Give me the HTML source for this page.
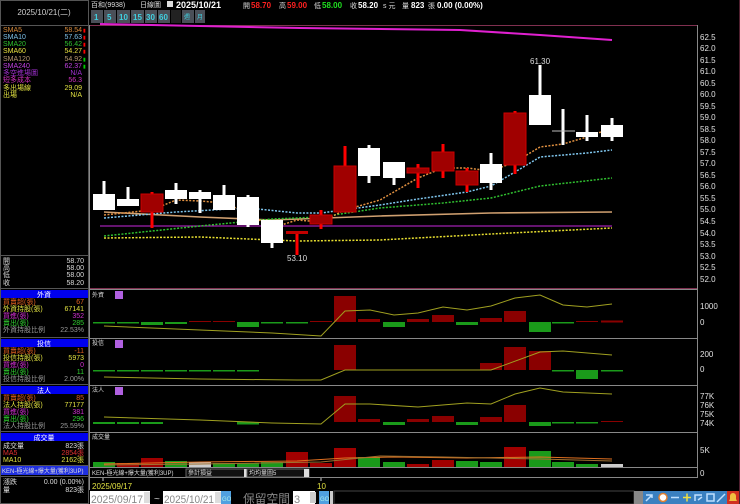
<!DOCTYPE html>
<html><head><meta charset="utf-8"><style>
html,body{margin:0;padding:0;background:#000;width:740px;height:504px;overflow:hidden}
svg{display:block}
text{font-family:"Liberation Sans","Noto Sans CJK TC",sans-serif}
.s{font-size:7px}
.r{text-anchor:end}
.ax{font-size:8px;fill:#e0e0e0;font-family:"DejaVu Sans",sans-serif}
</style></head><body>
<svg width="740" height="504" viewBox="0 0 740 504" xmlns="http://www.w3.org/2000/svg">
<rect width="740" height="504" fill="#000"/>
<rect x="0.5" y="0.5" width="88" height="503" fill="none" stroke="#555"/>
<line x1="0" y1="25.5" x2="89" y2="25.5" stroke="#555"/>
<text x="44" y="15" fill="#ccc" font-size="8" text-anchor="middle">2025/10/21(二)</text>
<g class="s">
<text x="3" y="32" fill="#d88a3a">SMA5</text><text x="82" y="32" fill="#d88a3a" class="r">58.54</text>
<text x="3" y="39" fill="#7ec0e8">SMA10</text><text x="82" y="39" fill="#7ec0e8" class="r">57.63</text>
<text x="3" y="46" fill="#2ec02e">SMA20</text><text x="82" y="46" fill="#2ec02e" class="r">56.42</text>
<text x="3" y="53" fill="#e8e040">SMA60</text><text x="82" y="53" fill="#e8e040" class="r">54.27</text>
<text x="3" y="61" fill="#b89870">SMA120</text><text x="82" y="61" fill="#b89870" class="r">54.92</text>
<text x="3" y="68" fill="#c040e0">SMA240</text><text x="82" y="68" fill="#c040e0" class="r">62.37</text>
<text x="3" y="75" fill="#a030d0">多空進場圖</text><text x="82" y="75" fill="#a030d0" class="r">N/A</text>
<text x="3" y="82" fill="#d030c0">短多成本</text><text x="82" y="82" fill="#d030c0" class="r">56.3</text>
<text x="3" y="90" fill="#e0e040">多出場線</text><text x="82" y="90" fill="#e0e040" class="r">29.09</text>
<text x="3" y="97" fill="#e0e040">出場</text><text x="82" y="97" fill="#e0e040" class="r">N/A</text>
</g>
<g fill="#f00" font-size="5"><text x="83" y="32">▮</text><text x="83" y="39">▮</text><text x="83" y="46">▮</text><text x="83" y="53">▮</text></g>
<g fill="#0c0" font-size="5"><text x="83" y="61">▮</text><text x="83" y="68">▮</text></g>
<line x1="0" y1="255.5" x2="89" y2="255.5" stroke="#555"/>
<g class="s" fill="#ddd">
<text x="3" y="263">開</text><text x="84" y="263" class="r">58.70</text>
<text x="3" y="270">高</text><text x="84" y="270" class="r">58.00</text>
<text x="3" y="277">低</text><text x="84" y="277" class="r">58.00</text>
<text x="3" y="285">收</text><text x="84" y="285" class="r">58.20</text>
</g>
<line x1="0" y1="288.5" x2="89" y2="288.5" stroke="#555"/>
<g class="s">
<rect x="1" y="290" width="87" height="8" fill="#0000ee"/><text x="44" y="297" fill="#fff" text-anchor="middle">外資</text>
<text x="3" y="304" fill="#e06020">買賣超(張)</text><text x="84" y="304" class="r" fill="#e06020">67</text>
<text x="3" y="311" fill="#e0e040">外資持股(張)</text><text x="84" y="311" class="r" fill="#e0e040">67141</text>
<text x="3" y="318" fill="#d030d0">買進(張)</text><text x="84" y="318" class="r" fill="#d030d0">352</text>
<text x="3" y="325" fill="#30d030">賣出(張)</text><text x="84" y="325" class="r" fill="#30d030">285</text>
<text x="3" y="332" fill="#999">外資持股比例</text><text x="84" y="332" class="r" fill="#999">22.53%</text>
<line x1="0" y1="337.5" x2="89" y2="337.5" stroke="#555"/>
<rect x="1" y="339" width="87" height="8" fill="#0000ee"/><text x="44" y="346" fill="#fff" text-anchor="middle">投信</text>
<text x="3" y="353" fill="#e06020">買賣超(張)</text><text x="84" y="353" class="r" fill="#e06020">-11</text>
<text x="3" y="360" fill="#e0e040">投信持股(張)</text><text x="84" y="360" class="r" fill="#e0e040">5973</text>
<text x="3" y="367" fill="#d030d0">買進(張)</text><text x="84" y="367" class="r" fill="#d030d0">0</text>
<text x="3" y="374" fill="#30d030">賣出(張)</text><text x="84" y="374" class="r" fill="#30d030">11</text>
<text x="3" y="381" fill="#999">投信持股比例</text><text x="84" y="381" class="r" fill="#999">2.00%</text>
<line x1="0" y1="384.5" x2="89" y2="384.5" stroke="#555"/>
<rect x="1" y="386" width="87" height="8" fill="#0000ee"/><text x="44" y="393" fill="#fff" text-anchor="middle">法人</text>
<text x="3" y="400" fill="#e06020">買賣超(張)</text><text x="84" y="400" class="r" fill="#e06020">85</text>
<text x="3" y="407" fill="#e0e040">法人持股(張)</text><text x="84" y="407" class="r" fill="#e0e040">77177</text>
<text x="3" y="414" fill="#d030d0">買進(張)</text><text x="84" y="414" class="r" fill="#d030d0">381</text>
<text x="3" y="421" fill="#30d030">賣出(張)</text><text x="84" y="421" class="r" fill="#30d030">296</text>
<text x="3" y="428" fill="#999">法人持股比例</text><text x="84" y="428" class="r" fill="#999">25.59%</text>
<line x1="0" y1="431.5" x2="89" y2="431.5" stroke="#555"/>
<rect x="1" y="433" width="87" height="8" fill="#0000ee"/><text x="44" y="440" fill="#fff" text-anchor="middle">成交量</text>
<text x="3" y="448" fill="#ddd">成交量</text><text x="84" y="448" class="r" fill="#ddd">823張</text>
<text x="3" y="455" fill="#e03030">MA5</text><text x="84" y="455" class="r" fill="#e03030">2854張</text>
<text x="3" y="462" fill="#e0e040">MA10</text><text x="84" y="462" class="r" fill="#e0e040">2162張</text>
<line x1="0" y1="465.5" x2="89" y2="465.5" stroke="#555"/>
<rect x="1" y="466" width="87" height="9" fill="#2030e0"/><text x="2" y="473" fill="#ddd" font-size="6">KEN-極光線+爆大量(獲利3UP)</text>
<line x1="0" y1="476.5" x2="89" y2="476.5" stroke="#555"/>
<text x="3" y="484" fill="#ddd">漲跌</text><text x="84" y="484" class="r" fill="#ddd">0.00 (0.00%)</text>
<text x="3" y="492" fill="#ddd">量</text><text x="84" y="492" class="r" fill="#ddd">823張</text>
</g>
<g font-size="7" fill="#ddd">
<text x="91" y="7">百和(9938)</text><text x="140" y="7">日線圖</text>
<rect x="167" y="1" width="6" height="6" fill="#ddd"/>
<text x="176" y="8" font-size="9" font-weight="bold" fill="#fff">2025/10/21</text>
<text x="243" y="8">開</text><text x="251" y="8" font-size="8" fill="#ff2020" font-weight="bold">58.70</text>
<text x="279" y="8">高</text><text x="287" y="8" font-size="8" fill="#ff2020" font-weight="bold">59.00</text>
<text x="314" y="8">低</text><text x="322" y="8" font-size="8" fill="#20e020" font-weight="bold">58.00</text>
<text x="350" y="8">收</text><text x="358" y="8" font-size="8" fill="#fff" font-weight="bold">58.20</text>
<text x="383" y="8">s 元</text><text x="402" y="8">量</text><text x="411" y="8" font-size="8" fill="#fff" font-weight="bold">823</text><text x="428" y="8">張</text>
<text x="437" y="8" font-size="8" fill="#fff" font-weight="bold">0.00 (0.00%)</text>
</g>
<g font-size="8" fill="#40d0e0" font-weight="bold">
<rect x="91" y="10" width="12" height="13" fill="#4a4f58"/><text x="94" y="20">1</text>
<rect x="104" y="10" width="12" height="13" fill="#4a4f58"/><text x="107" y="20">5</text>
<rect x="117" y="10" width="13" height="13" fill="#4a4f58"/><text x="119" y="20">10</text>
<rect x="131" y="10" width="13" height="13" fill="#4a4f58"/><text x="133" y="20">15</text>
<rect x="145" y="10" width="12" height="13" fill="#4a4f58"/><text x="146" y="20">30</text>
<rect x="158" y="10" width="12" height="13" fill="#4a4f58"/><text x="159" y="20">60</text>
<rect x="171" y="10" width="10" height="13" fill="#222"/>
<rect x="182" y="10" width="12" height="13" fill="#4a4f58"/><text x="184" y="19" font-size="6" font-weight="normal">週</text>
<rect x="195" y="10" width="10" height="13" fill="#4a4f58"/><text x="197" y="19" font-size="6" font-weight="normal">月</text>
</g>
<g stroke="#888" stroke-width="1" fill="none">
<line x1="90" y1="289.5" x2="697" y2="289.5"/>
<line x1="90" y1="338.5" x2="697" y2="338.5"/>
<line x1="90" y1="385.5" x2="697" y2="385.5"/>
<line x1="90" y1="432.5" x2="697" y2="432.5"/>
<line x1="90" y1="467.5" x2="697" y2="467.5"/>
<line x1="90" y1="477.5" x2="697" y2="477.5"/>
<line x1="697.5" y1="25" x2="697.5" y2="478"/>
<line x1="89.5" y1="25" x2="89.5" y2="490"/>
</g>
<line x1="90" y1="25.5" x2="697" y2="25.5" stroke="#803050"/>
<line x1="90" y1="288.5" x2="697" y2="288.5" stroke="#803050"/>
<line x1="739.5" y1="0" x2="739.5" y2="504" stroke="#502030"/>
<g class="ax">
<text x="700" y="40">62.5</text><text x="700" y="51">62.0</text><text x="700" y="63">61.5</text><text x="700" y="74">61.0</text><text x="700" y="86">60.5</text><text x="700" y="97">60.0</text><text x="700" y="109">59.5</text><text x="700" y="120">59.0</text><text x="700" y="132">58.5</text><text x="700" y="143">58.0</text><text x="700" y="155">57.5</text><text x="700" y="166">57.0</text><text x="700" y="178">56.5</text><text x="700" y="189">56.0</text><text x="700" y="201">55.5</text><text x="700" y="212">55.0</text><text x="700" y="224">54.5</text><text x="700" y="236">54.0</text><text x="700" y="247">53.5</text><text x="700" y="259">53.0</text><text x="700" y="270">52.5</text><text x="700" y="282">52.0</text>
<text x="700" y="309">1000</text><text x="700" y="325">0</text>
<text x="700" y="357">200</text><text x="700" y="372">0</text>
<text x="700" y="399">77K</text><text x="700" y="408">76K</text><text x="700" y="417">75K</text><text x="700" y="426">74K</text>
<text x="700" y="453">5K</text><text x="700" y="476">0</text>
</g>
<polyline fill="none" stroke="#e020d0" stroke-width="2" points="100,24 300,28 460,30 540,35 612,40"/>
<polyline fill="none" stroke="#a020b0" stroke-width="1.2" points="100,226 612,226"/>
<polyline fill="none" stroke="#d0a070" stroke-width="1.6" points="104,212 200,217 272,220 380,216 491,213 612,212"/>
<polyline fill="none" stroke="#e8e030" stroke-width="1.5" stroke-dasharray="2,1.5" points="104,238 200,237 297,241 380,240 491,234 612,228"/>
<polyline fill="none" stroke="#30c030" stroke-width="1.5" stroke-dasharray="2,1.5" points="104,236 200,226 272,219 321,217 380,208 443,203 491,198 540,186 612,178"/>
<polyline fill="none" stroke="#80c8f0" stroke-width="1.5" stroke-dasharray="2,1.5" points="104,218 176,212 248,208 297,213 321,213 380,205 418,199 467,192 491,186 515,172 540,157 587,153 612,150"/>
<polyline fill="none" stroke="#e09040" stroke-width="1.5" stroke-dasharray="2,1.5" points="104,215 152,210 176,200 200,201 224,203 248,213 272,228 297,220 321,222 345,210 380,200 418,178 443,168 467,168 491,171 515,162 540,147 563,144 587,137 612,128"/>
<g>
<line x1="104" y1="181" x2="104" y2="194" stroke="#fff" stroke-width="3"/><rect x="93" y="194" width="22" height="16" fill="#fff"/>
<line x1="128" y1="187" x2="128" y2="199" stroke="#fff" stroke-width="3"/><rect x="117" y="199" width="22" height="7" fill="#fff"/>
<line x1="152" y1="192" x2="152" y2="228" stroke="#f00" stroke-width="3"/><rect x="141" y="194" width="22" height="18" fill="#a00000" stroke="#c00"/>
<line x1="176" y1="183" x2="176" y2="204" stroke="#fff" stroke-width="3"/><rect x="165" y="190" width="22" height="9" fill="#fff"/>
<line x1="200" y1="190" x2="200" y2="213" stroke="#fff" stroke-width="3"/><rect x="189" y="192" width="22" height="7" fill="#fff"/>
<line x1="224" y1="185" x2="224" y2="210" stroke="#fff" stroke-width="3"/><rect x="213" y="195" width="22" height="15" fill="#fff"/>
<line x1="248" y1="195" x2="248" y2="227" stroke="#fff" stroke-width="3"/><rect x="237" y="197" width="22" height="28" fill="#fff"/>
<line x1="272" y1="220" x2="272" y2="248" stroke="#fff" stroke-width="3"/><rect x="261" y="220" width="22" height="23" fill="#fff"/>
<line x1="297" y1="232" x2="297" y2="255" stroke="#f00" stroke-width="3"/><rect x="286" y="231" width="22" height="3" fill="#c00000"/>
<line x1="321" y1="210" x2="321" y2="229" stroke="#f00" stroke-width="3"/><rect x="310" y="215" width="22" height="9" fill="#a00000" stroke="#c00"/>
<line x1="345" y1="146" x2="345" y2="166" stroke="#f00" stroke-width="3"/><rect x="334" y="166" width="22" height="46" fill="#a00000" stroke="#c00"/>
<line x1="369" y1="145" x2="369" y2="183" stroke="#fff" stroke-width="3"/><rect x="358" y="148" width="22" height="28" fill="#fff"/>
<line x1="394" y1="162" x2="394" y2="185" stroke="#fff" stroke-width="3"/><rect x="383" y="162" width="22" height="16" fill="#fff"/>
<line x1="418" y1="164" x2="418" y2="188" stroke="#f00" stroke-width="3"/><rect x="407" y="168" width="22" height="5" fill="#a00000" stroke="#c00"/>
<line x1="443" y1="144" x2="443" y2="178" stroke="#f00" stroke-width="3"/><rect x="432" y="152" width="22" height="19" fill="#a00000" stroke="#c00"/>
<line x1="467" y1="168" x2="467" y2="192" stroke="#f00" stroke-width="3"/><rect x="456" y="171" width="22" height="14" fill="#a00000" stroke="#c00"/>
<line x1="491" y1="153" x2="491" y2="190" stroke="#fff" stroke-width="3"/><rect x="480" y="164" width="22" height="19" fill="#fff"/>
<line x1="515" y1="111" x2="515" y2="174" stroke="#f00" stroke-width="3"/><rect x="504" y="113" width="22" height="52" fill="#a00000" stroke="#c00"/>
<line x1="540" y1="65" x2="540" y2="95" stroke="#fff" stroke-width="3"/><rect x="529" y="95" width="22" height="30" fill="#fff"/>
<line x1="563" y1="109" x2="563" y2="145" stroke="#fff" stroke-width="3"/><line x1="552" y1="131" x2="575" y2="131" stroke="#bbb"/>
<line x1="587" y1="115" x2="587" y2="141" stroke="#fff" stroke-width="3"/><rect x="576" y="132" width="22" height="5" fill="#fff"/>
<line x1="612" y1="118" x2="612" y2="141" stroke="#fff" stroke-width="3"/><rect x="601" y="125" width="22" height="12" fill="#fff"/>
</g>
<text x="287" y="261" fill="#ddd" font-size="8">53.10</text>
<text x="530" y="64" fill="#ddd" font-size="8">61.30</text>
<g font-size="6" fill="#ddd"><text x="92" y="297">外資</text><text x="92" y="345">投信</text><text x="92" y="392">法人</text><text x="92" y="439">成交量</text></g>
<g fill="#b060e0"><rect x="115" y="291" width="8" height="8"/><rect x="115" y="340" width="8" height="8"/><rect x="115" y="387" width="8" height="8"/></g>
<g fill="#1a9a1a">
<rect x="93" y="322" width="22" height="1.5"/><rect x="117" y="322" width="22" height="1.5"/><rect x="141" y="322" width="22" height="3"/><rect x="165" y="322" width="22" height="2"/>
<rect x="237" y="322" width="22" height="5"/><rect x="261" y="322" width="22" height="1.5"/><rect x="286" y="322" width="22" height="1.5"/>
<rect x="383" y="322" width="22" height="5"/><rect x="456" y="322" width="22" height="3"/><rect x="529" y="322" width="22" height="10"/><rect x="552" y="322" width="22" height="1.5"/>
</g>
<g fill="#8a0000">
<rect x="189" y="321" width="22" height="1"/><rect x="213" y="321" width="22" height="1"/><rect x="310" y="321" width="22" height="1"/>
<rect x="334" y="296" width="22" height="26"/><rect x="358" y="319" width="22" height="3"/><rect x="407" y="319" width="22" height="3"/><rect x="432" y="315" width="22" height="7"/><rect x="480" y="318" width="22" height="4"/><rect x="504" y="311" width="22" height="11"/><rect x="576" y="321" width="22" height="1"/><rect x="601" y="320.5" width="22" height="2"/>
</g>
<polyline fill="none" stroke="#a0a020" stroke-width="1" points="104,326 200,330 272,333 321,336 345,311 370,310 394,315 418,313 443,307 467,310 491,306 515,298 540,295 563,305 587,307 612,304"/>
<g fill="#1a9a1a">
<rect x="93" y="370" width="22" height="1.5"/><rect x="117" y="370" width="22" height="1.5"/><rect x="141" y="370" width="22" height="1.5"/><rect x="165" y="370" width="22" height="1.5"/><rect x="189" y="370" width="22" height="1.5"/><rect x="213" y="370" width="22" height="1.5"/><rect x="237" y="370" width="22" height="1.5"/>
<rect x="552" y="370" width="22" height="1.5"/><rect x="576" y="370" width="22" height="9"/><rect x="601" y="370" width="22" height="1.5"/>
</g>
<g fill="#8a0000"><rect x="334" y="345" width="22" height="25"/><rect x="480" y="363" width="22" height="7"/><rect x="504" y="347" width="22" height="23"/><rect x="529" y="351" width="22" height="19"/></g>
<polyline fill="none" stroke="#a0a020" stroke-width="1" points="104,377 200,379 297,380 321,380 345,370 491,370 540,352 563,351 612,355"/>
<g fill="#1a9a1a">
<rect x="93" y="422" width="22" height="2"/><rect x="117" y="422" width="22" height="2"/><rect x="141" y="422" width="22" height="2"/><rect x="237" y="422" width="22" height="2.5"/>
<rect x="383" y="422" width="22" height="3"/><rect x="456" y="422" width="22" height="3"/><rect x="529" y="422" width="22" height="4"/><rect x="552" y="422" width="22" height="1.5"/><rect x="576" y="422" width="22" height="1.5"/>
</g>
<g fill="#8a0000"><rect x="334" y="396" width="22" height="26"/><rect x="358" y="419" width="22" height="3"/><rect x="407" y="419" width="22" height="3"/><rect x="432" y="416" width="22" height="6"/><rect x="480" y="417" width="22" height="5"/><rect x="504" y="405" width="22" height="17"/><rect x="601" y="421" width="22" height="1"/></g>
<polyline fill="none" stroke="#a0a020" stroke-width="1" points="104,417 200,420 272,423 321,424 345,404 370,404 418,407 467,403 491,404 515,394 540,388 563,392 612,394"/>
<g fill="#1a9a1a">
<rect x="93" y="462" width="22" height="5"/><rect x="165" y="461" width="22" height="6"/><rect x="213" y="463" width="22" height="4"/><rect x="237" y="463" width="22" height="4"/><rect x="261" y="462" width="22" height="5"/>
<rect x="358" y="457" width="22" height="10"/><rect x="383" y="462" width="22" height="5"/><rect x="456" y="461" width="22" height="6"/><rect x="480" y="462" width="22" height="5"/><rect x="529" y="451" width="22" height="16"/><rect x="552" y="462" width="22" height="5"/><rect x="576" y="464" width="22" height="3"/>
</g>
<g fill="#a00000"><rect x="117" y="463" width="22" height="4"/><rect x="141" y="458" width="22" height="9"/><rect x="286" y="452" width="22" height="15"/><rect x="310" y="463" width="22" height="4"/><rect x="334" y="448" width="22" height="19"/><rect x="407" y="464" width="22" height="3"/><rect x="432" y="460" width="22" height="7"/><rect x="504" y="447" width="22" height="20"/></g>
<g fill="#ccc"><rect x="189" y="462" width="22" height="5"/><rect x="601" y="464" width="22" height="3"/></g>
<polyline fill="none" stroke="#e07020" stroke-width="1" points="104,464 200,462 297,461 345,458 394,457 467,458 540,457 612,459"/>
<polyline fill="none" stroke="#a07030" stroke-width="1" points="104,465 200,464 321,462 380,456 443,457 540,459 612,461"/>
<g font-size="6" fill="#ddd">
<text x="92" y="475">KEN-極光線+爆大量(獲利3UP)</text>
<rect x="186" y="469" width="63" height="8" fill="#111" stroke="#666"/><text x="188" y="475">參計損益</text><rect x="244" y="469" width="5" height="8" fill="#ddd"/>
<rect x="247" y="469" width="62" height="8" fill="#111" stroke="#666"/><text x="249" y="475">均均量圖5</text><rect x="304" y="469" width="5" height="8" fill="#ddd"/>
</g>
<line x1="103" y1="478" x2="103" y2="481" stroke="#ccc"/><line x1="321" y1="478" x2="321" y2="481" stroke="#ccc"/>
<text x="92" y="489" fill="#e0e040" font-size="8">2025/09/17</text>
<text x="317" y="489" fill="#e0e040" font-size="8">10</text>
<g>
<rect x="90" y="491" width="60" height="13" fill="#fff"/><text x="91" y="503" fill="#888" font-size="11" textLength="52" lengthAdjust="spacingAndGlyphs">2025/09/17</text><rect x="144" y="492" width="6" height="11" fill="#ddd"/>
<text x="154" y="502" fill="#ccc" font-size="10">~</text>
<rect x="163" y="491" width="58" height="13" fill="#fff"/><text x="164" y="503" fill="#888" font-size="11" textLength="50" lengthAdjust="spacingAndGlyphs">2025/10/21</text><rect x="215" y="492" width="6" height="11" fill="#ddd"/>
<rect x="221" y="491" width="10" height="13" fill="#50a0e0"/><text x="222" y="501" fill="#aee" font-size="6">GO</text>
<text x="243" y="503" fill="#888" font-size="12" textLength="47" lengthAdjust="spacingAndGlyphs">保留空間</text>
<rect x="293" y="491" width="22" height="13" fill="#fff"/><text x="294" y="503" fill="#888" font-size="11">3</text><rect x="310" y="492" width="6" height="11" fill="#ccc"/>
<rect x="319" y="491" width="10" height="13" fill="#50a0e0"/><text x="320" y="501" fill="#aee" font-size="6">GO</text>
<rect x="330" y="491" width="3" height="13" fill="#ccc"/>
<rect x="334" y="491" width="300" height="13" fill="#000" stroke="#444"/>
<rect x="634" y="491" width="9" height="13" fill="#888"/>
<rect x="643" y="491" width="84" height="13" fill="#3a80c0"/>
<g stroke="#bfe0ff" stroke-width="1.5" fill="none">
<path d="M646,501 L652,495 M646,495 L652,495 L652,498"/>
<circle cx="663" cy="497.5" r="4" fill="#fff" stroke="#e08030"/>
<line x1="671" y1="497.5" x2="679" y2="497.5"/>
<path d="M683,497.5 h8 M687,493.5 v8" stroke="#f0e040"/>
<path d="M695,501 v-6 h7 M698,500 l4,-3"/>
<rect x="707" y="494" width="7" height="7"/>
<path d="M717,502 L725,494"/>
</g>
<rect x="727" y="491" width="12" height="13" fill="#d03020"/><path d="M729,501 h8 l-1,-2 v-3 a3,3 0 0 0 -6,0 v3 z" fill="#f0c040"/>
</g>
</svg>
</body></html>
